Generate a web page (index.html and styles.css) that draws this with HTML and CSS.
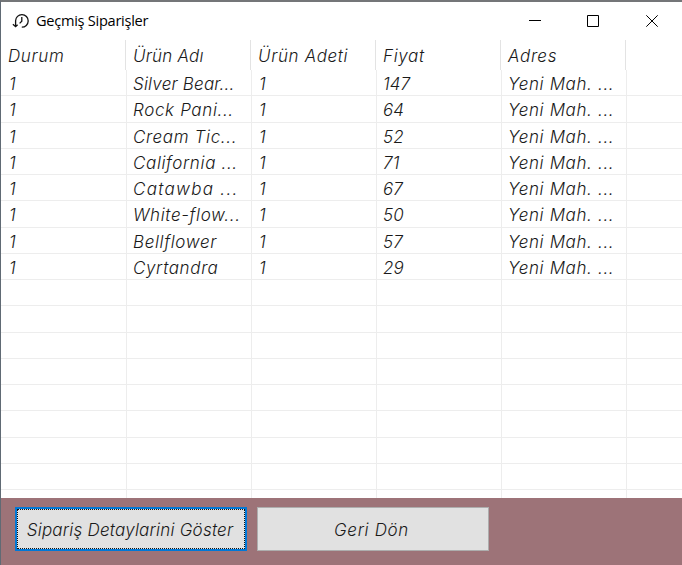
FILE: index.html
```html
<!DOCTYPE html>
<html lang="tr">
<head>
<meta charset="utf-8">
<title>Geçmiş Siparişler</title>
<link rel="stylesheet" href="styles.css">
</head>
<body>
<div class="window">
  <header class="titlebar">
    <svg class="app-icon" width="18" height="18" viewBox="0 0 18 18"><path d="M3.6 14.4V8.8A6.3 6.3 0 1 1 9.8 15.2M.9 12.2l2.7 2.5 2-2M9.8 5v4.2L7.6 11.4"/></svg>
    <h1>Geçmiş Siparişler</h1>
    <div class="controls">
      <svg width="12" height="12" viewBox="0 0 12 12"><path d="M0 5.5h12"/></svg>
      <svg width="12" height="12" viewBox="0 0 12 12"><path d="M.5.5h11v11H.5z"/></svg>
      <svg class="close" width="12" height="12" viewBox="0 0 12 12"><path d="M.3.3l11.4 11.4M11.7.3L.3 11.7"/></svg>
    </div>
  </header>
  <main class="list">
    <div class="row head"><span>Durum</span><span class="snug">Ürün Adı</span><span>Ürün Adeti</span><span>Fiyat</span><span>Adres</span></div>
    <div class="rows">
      <div class="row"><span class="one">1</span><span class="snug">Silver Bear...</span><span class="one">1</span><span class="num">147</span><span>Yeni Mah. ...</span></div>
      <div class="row"><span class="one">1</span><span>Rock Pani...</span><span class="one">1</span><span class="num">64</span><span>Yeni Mah. ...</span></div>
      <div class="row"><span class="one">1</span><span>Cream Tic...</span><span class="one">1</span><span class="num">52</span><span>Yeni Mah. ...</span></div>
      <div class="row"><span class="one">1</span><span>California ...</span><span class="one">1</span><span class="num">71</span><span>Yeni Mah. ...</span></div>
      <div class="row"><span class="one">1</span><span class="wide">Catawba ...</span><span class="one">1</span><span class="num">67</span><span>Yeni Mah. ...</span></div>
      <div class="row"><span class="one">1</span><span>White-flow...</span><span class="one">1</span><span class="num">50</span><span>Yeni Mah. ...</span></div>
      <div class="row"><span class="one">1</span><span>Bellflower</span><span class="one">1</span><span class="num">57</span><span>Yeni Mah. ...</span></div>
      <div class="row"><span class="one">1</span><span>Cyrtandra</span><span class="one">1</span><span class="num">29</span><span>Yeni Mah. ...</span></div>
      <div class="row"><span></span><span></span><span></span><span></span><span></span></div>
      <div class="row"><span></span><span></span><span></span><span></span><span></span></div>
      <div class="row"><span></span><span></span><span></span><span></span><span></span></div>
      <div class="row"><span></span><span></span><span></span><span></span><span></span></div>
      <div class="row"><span></span><span></span><span></span><span></span><span></span></div>
      <div class="row"><span></span><span></span><span></span><span></span><span></span></div>
      <div class="row"><span></span><span></span><span></span><span></span><span></span></div>
      <div class="row"><span></span><span></span><span></span><span></span><span></span></div>
      <div class="row"><span></span><span></span><span></span><span></span><span></span></div>
    </div>
  </main>
  <footer class="actions">
    <button class="primary"><span>Sipariş Detaylarini Göster</span></button>
    <button class="back">Geri Dön</button>
  </footer>
</div>
</body>
</html>
```
FILE: styles.css
```css
* { box-sizing: border-box; }
body { margin: 0; background: #fff; overflow: hidden; }
.window {
  width: 682px; height: 565px;
  display: flex; flex-direction: column;
  border-top: 2px solid #747678;
  border-left: 1px solid #606a74;
}
.titlebar {
  height: 38px; flex: none;
  display: flex; align-items: center;
  padding-left: 11px;
}
.app-icon { fill: none; stroke: #111; stroke-width: 1.3; }
h1 {
  margin: 0 0 2px 6px;
  font: 400 14.6px/20px "Open Sans", "Noto Sans", sans-serif;
  letter-spacing: -.28px; color: #000;
}
.controls { margin-left: auto; display: flex; gap: 46px; padding-right: 24px; }
.controls svg { display: block; fill: none; stroke: #000; stroke-width: 1; }
.controls .close { margin-left: 1px; }

.list, button {
  font-family: Inter, "Liberation Sans", sans-serif;
  font-style: italic; font-weight: 350; font-size: 17px;
  font-feature-settings: "cv11";
  letter-spacing: .64px;
  color: #1a1a1a;
}
.list { height: 458px; flex: none; overflow: hidden; }
.row {
  display: grid; grid-template-columns: repeat(5, 125px);
  grid-template-rows: 100%;
  height: 26.25px; line-height: 28px;
  border-bottom: 1px solid #ededed;
  padding-left: 1px;
}
.row span {
  border-right: 1px solid #ededed;
  padding-left: 6px; white-space: pre; overflow: hidden;
}
.row .one { padding-left: 7px; }
.row .snug { letter-spacing: .2px; }
.row .wide { letter-spacing: 1.3px; }
.row .num { letter-spacing: .1px; }
.head { height: 30px; line-height: 32px; border: 0; padding-left: 0; }
.head span { padding-left: 7px; border-color: #e3e3e3; }
.actions {
  flex: 1; background: #9d7378;
  display: flex; gap: 10px; align-items: flex-start;
  padding: 9px 0 0 14px;
}
button {
  width: 232px; height: 44px; padding: 0;
  background: #e1e1e1; border: 1px solid #adadad; border-radius: 0;
}
.back { padding: 2px 3px 0 0; letter-spacing: .65px; }
.primary { border: 2px solid #0078d7; letter-spacing: .22px; }
.primary span {
  display: block; height: 40px; line-height: 40px; padding-right: 2px;
  border: 1px dotted #111;
}
```
